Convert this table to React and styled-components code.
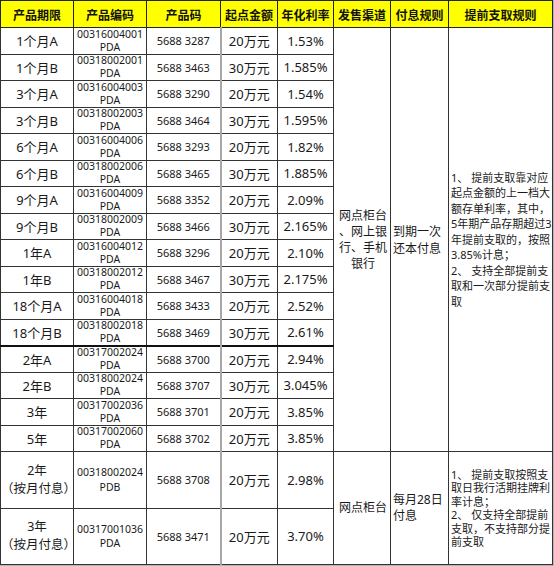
import styled, { createGlobalStyle } from "styled-components";

const Global = createGlobalStyle`
  body {
    margin: 0;
    background: #fff;
    font-family: "Noto Sans", "Noto Sans CJK SC", sans-serif;
    color: #1a1a1a;
  }
`;

const Frame = styled.div`
  width: 552px;
  border-right: 2px solid #b4b4b4;
  border-bottom: 2px solid #b4b4b4;
`;

const Table = styled.table`
  border-collapse: collapse;
  table-layout: fixed;
  width: 552px;
`;

const Head = styled.th`
  height: 26px;
  padding: 0;
  background: #ffff00;
  border: 1px solid #222;
  font-size: 12px;
  font-weight: 700;
  font-family: "Noto Sans CJK SC", sans-serif;
  text-align: center;
  white-space: nowrap;
  color: #111;
`;

const Row = styled.tr`
  height: ${(p) => p.$h}px;
  border-top: ${(p) => (p.$thick ? "2px solid #111" : "1px solid #333")};
`;

const Cell = styled.td`
  padding: 0;
  border: 1px solid #333;
  border-left: ${(p) => (p.$grey ? "2px solid #a8a8a8" : "1px solid #333")};
  text-align: center;
  vertical-align: middle;
  font-size: ${(p) => p.$size || 13}px;
  white-space: nowrap;
  overflow: visible;
`;

const Stack = styled.div`
  height: ${(p) => p.$height || 20}px;
  display: flex;
  flex-direction: column;
  justify-content: center;
  line-height: ${(p) => p.$lh || 13}px;
  overflow: visible;
`;

const Merged = styled.td`
  padding: 0 0 0 2px;
  border: 1px solid #333;
  vertical-align: middle;
  text-align: ${(p) => p.$align || "left"};
  font-size: ${(p) => p.$size || 12}px;
  line-height: ${(p) => p.$lh || 16}px;
  font-family: "Noto Sans", "Noto Sans CJK SC", sans-serif;
  white-space: nowrap;
`;

const Line = styled.div``;

const rows = [
  ["1个月A", "00316004001", "PDA", "5688 3287", "20万元", "1.53%"],
  ["1个月B", "00318002001", "PDA", "5688 3463", "30万元", "1.585%"],
  ["3个月A", "00316004003", "PDA", "5688 3290", "20万元", "1.54%"],
  ["3个月B", "00318002003", "PDA", "5688 3464", "30万元", "1.595%"],
  ["6个月A", "00316004006", "PDA", "5688 3293", "20万元", "1.82%"],
  ["6个月B", "00318002006", "PDA", "5688 3465", "30万元", "1.885%"],
  ["9个月A", "00316004009", "PDA", "5688 3352", "20万元", "2.09%"],
  ["9个月B", "00318002009", "PDA", "5688 3466", "30万元", "2.165%"],
  ["1年A", "00316004012", "PDA", "5688 3296", "20万元", "2.10%"],
  ["1年B", "00318002012", "PDA", "5688 3467", "30万元", "2.175%"],
  ["18个月A", "00316004018", "PDA", "5688 3433", "20万元", "2.52%"],
  ["18个月B", "00318002018", "PDA", "5688 3469", "30万元", "2.61%"],
  ["2年A", "00317002024", "PDA", "5688 3700", "20万元", "2.94%"],
  ["2年B", "00318002024", "PDA", "5688 3707", "30万元", "3.045%"],
  ["3年", "00317002036", "PDA", "5688 3701", "20万元", "3.85%"],
  ["5年", "00317002060", "PDA", "5688 3702", "20万元", "3.85%"],
];

const monthly = [
  ["2年", "00318002024", "PDB", "5688 3708", "20万元", "2.98%"],
  ["3年", "00317001036", "PDA", "5688 3471", "20万元", "3.70%"],
];

const rulesTop = [
  "1、 提前支取靠对应",
  "起点金额的上一档大",
  "额存单利率，其中，",
  "5年期产品存期超过3",
  "年提前支取的，按照",
  "3.85%计息；",
  "2、 支持全部提前支",
  "取和一次部分提前支",
  "取",
];

const rulesBottom = [
  "1、 提前支取按照支",
  "取日我行活期挂牌利",
  "率计息；",
  "2、 仅支持全部提前",
  "支取，不支持部分提",
  "前支取",
];

const widths = [73, 73, 74, 57, 56, 57, 58, 104];
const heads = ["产品期限", "产品编码", "产品码", "起点金额", "年化利率", "发售渠道", "付息规则", "提前支取规则"];

export default function App() {
  return (
    <>
      <Global />
      <Frame>
        <Table>
          <colgroup>
            {widths.map((w, i) => (
              <col key={i} style={{ width: w }} />
            ))}
          </colgroup>
          <thead>
            <tr>
              {heads.map((h) => (
                <Head key={h}>{h}</Head>
              ))}
            </tr>
          </thead>
          <tbody>
            {rows.map((r, i) => (
              <Row key={r[1] + i} $h={26.5} $thick={i === 12}>
                <Cell>{r[0]}</Cell>
                <Cell $size={10.5}>
                  <Stack>
                    <Line>{r[1]}</Line>
                    <Line>{r[2]}</Line>
                  </Stack>
                </Cell>
                <Cell $size={11}>{r[3]}</Cell>
                <Cell $grey>{r[4]}</Cell>
                <Cell>{r[5]}</Cell>
                {i === 0 && (
                  <>
                    <Merged rowSpan={16} $align="center" $size={12} $lh={16}>
                      <Line>网点柜台</Line>
                      <Line>、网上银</Line>
                      <Line>行、手机</Line>
                      <Line>银行</Line>
                    </Merged>
                    <Merged rowSpan={16} $size={12} $lh={17}>
                      <Line>到期一次</Line>
                      <Line>还本付息</Line>
                    </Merged>
                    <Merged rowSpan={16} $size={11} $lh={15.5}>
                      {rulesTop.map((t) => (
                        <Line key={t}>{t}</Line>
                      ))}
                    </Merged>
                  </>
                )}
              </Row>
            ))}
            {monthly.map((r, i) => (
              <Row key={r[1] + "m"} $h={56.5}>
                <Cell $size={12.5}>
                  <Stack $lh={18} $height={40}>
                    <Line>{r[0]}</Line>
                    <Line>（按月付息）</Line>
                  </Stack>
                </Cell>
                <Cell $size={10.5}>
                  <Stack $lh={14.5} $height={40}>
                    <Line>{r[1]}</Line>
                    <Line>{r[2]}</Line>
                  </Stack>
                </Cell>
                <Cell $size={11}>{r[3]}</Cell>
                <Cell $grey>{r[4]}</Cell>
                <Cell>{r[5]}</Cell>
                {i === 0 && (
                  <>
                    <Merged rowSpan={2} $align="center" $size={12}>
                      网点柜台
                    </Merged>
                    <Merged rowSpan={2} $size={12} $lh={16}>
                      <Line>每月28日</Line>
                      <Line>付息</Line>
                    </Merged>
                    <Merged rowSpan={2} $size={11} $lh={13.5}>
                      {rulesBottom.map((t) => (
                        <Line key={t}>{t}</Line>
                      ))}
                    </Merged>
                  </>
                )}
              </Row>
            ))}
          </tbody>
        </Table>
      </Frame>
    </>
  );
}
